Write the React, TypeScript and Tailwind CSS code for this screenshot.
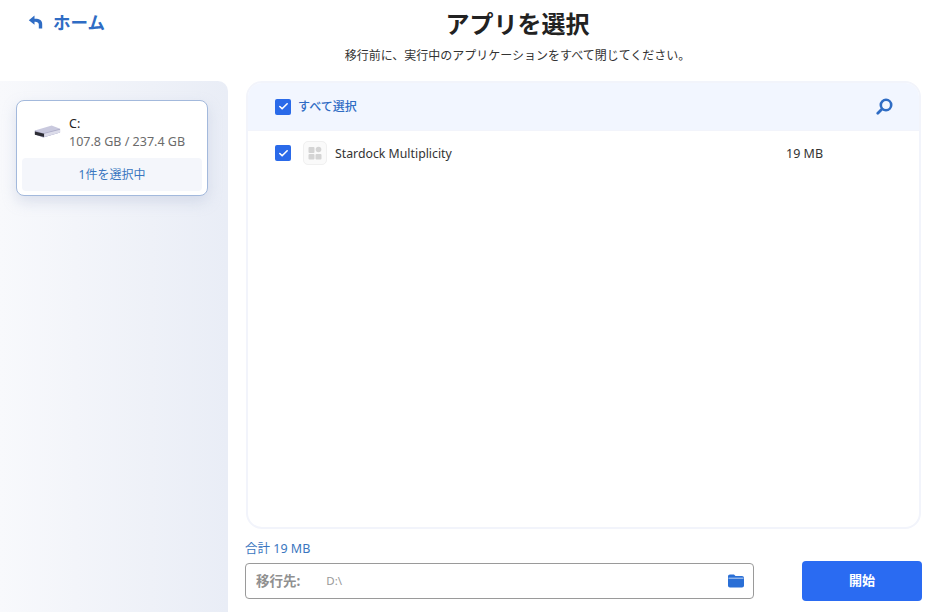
import { Check } from "lucide-react";

const FONT = "font-['Noto_Sans','Noto_Sans_CJK_JP',sans-serif]";

function Checkbox() {
  return (
    <span className="flex h-4 w-4 shrink-0 items-center justify-center rounded-[2px] bg-[#2a6ae9] text-white">
      <Check size={11} strokeWidth={3.5} />
    </span>
  );
}

function DriveIcon() {
  return (
    <svg width="28" height="15" viewBox="0 0 30 16">
      <path d="M2 7 L20 1.5 L29 5 L29 9 L11 14.5 L2 11 Z" fill="#c9c9de" />
      <path d="M2 7 L11 10 L29 5 L29 9 L11 14.5 L2 11 Z" fill="#aeaec8" />
      <path d="M2 8 L12 10.5 L12 14 L2 11.5 Z" fill="#2c2c34" />
      <path d="M12 10.5 L29 6 L29 9 L12 14 Z" fill="#dcdcea" />
    </svg>
  );
}

export default function App() {
  return (
    <div className={`flex h-[612px] w-[937px] flex-col overflow-hidden bg-white ${FONT}`}>
      <header className="flex h-[81px] shrink-0">
        <div className="flex w-[246px] shrink-0 items-start pl-[28px] pt-[12px]">
          <button type="button" className="flex items-center gap-[9px] text-[#2f6cc4]">
            <svg width="16" height="14" viewBox="0 0 16 14" fill="currentColor">
              <path d="M6.5 0.5 L0.8 5.2 L6.5 9.8 L6.5 6.8 C9 6.6 10.6 7.5 10.8 9.5 L10.8 13.5 L14.2 13.5 L14.2 9 C14.2 5.4 11.4 3.6 6.5 3.8 Z" />
            </svg>
            <span className="text-[17.5px] leading-[20px] font-bold">ホーム</span>
          </button>
        </div>
        <div className="flex flex-1 flex-col items-center pr-[148px]">
          <h1 className="mt-[8px] text-[24px] leading-[32px] font-bold text-[#222222]">アプリを選択</h1>
          <p className="mt-[8px] text-[12px] leading-[16px] text-[#333333]">
            移行前に、実行中のアプリケーションをすべて閉じてください。
          </p>
        </div>
      </header>

      <div className="flex min-h-0 flex-1">
        <aside className="w-[228px] shrink-0 rounded-tr-[10px] bg-gradient-to-r from-[#f8f9fc] to-[#e9edf6] pt-[19px] pl-[16px]">
          <div className="h-[96px] w-[192px] rounded-[8px] border border-[#a3b9dc] bg-white px-[5px] shadow-[0_6px_14px_rgba(170,180,210,0.35)]">
            <div className="flex h-[57px] items-center">
              <span className="ml-[11px] mt-[4px]">
                <DriveIcon />
              </span>
              <div className="ml-[8px] mt-[6px]">
                <div className="text-[12.5px] leading-[16px] text-[#222222]">C:</div>
                <div className="mt-[2px] text-[12.5px] leading-[16px] text-[#6b6b6b]">107.8 GB / 237.4 GB</div>
              </div>
            </div>
            <div className="flex h-[33px] items-center justify-center rounded-[4px] bg-[#f4f6fb] text-[12px] text-[#3a76c0]">
              1件を選択中
            </div>
          </div>
        </aside>

        <main className="flex min-w-0 flex-1 flex-col pl-[17px] pr-[15px]">
          <section className="mx-[1px] h-[448px] shrink-0 overflow-hidden rounded-[16px] border-2 border-[#f2f4fb] bg-white">
            <div className="flex h-[47px] items-center bg-[#f2f6ff] pl-[27px] pr-[26px]">
              <Checkbox />
              <span className="ml-[7px] text-[12px] font-medium text-[#2f6cc4]">すべて選択</span>
              <svg className="ml-auto" width="17" height="17" viewBox="0 0 17 17" fill="none" stroke="#2f6cc4">
                <circle cx="10" cy="7" r="5.2" strokeWidth="2.6" />
                <path d="M6 11 L1.8 15.2" strokeWidth="2.8" strokeLinecap="round" />
              </svg>
            </div>
            <div className="flex h-[45px] items-center border-t border-[#f2f4fb] pl-[27px]">
              <Checkbox />
              <span className="ml-[12px] flex h-6 w-6 shrink-0 items-center justify-center rounded-[5px] border border-[#f0f0f0] bg-[#fafafa]">
                <svg width="14" height="14" viewBox="0 0 14 14" fill="#d4d4d4">
                  <rect x="0.5" y="1" width="6" height="6" rx="1" />
                  <circle cx="10.5" cy="3.5" r="2.8" />
                  <rect x="0.5" y="8" width="6" height="5.5" rx="1" />
                  <rect x="7.5" y="8" width="6" height="5.5" rx="1" />
                </svg>
              </span>
              <span className="ml-[8px] mt-[2px] w-[451px] text-[12.3px] text-[#333333]">Stardock Multiplicity</span>
              <span className="mt-[2px] text-[12.5px] text-[#333333]">19 MB</span>
            </div>
          </section>

          <div className="mt-[12px] text-[12.5px] leading-[16px] text-[#3a76c0]">合計 19 MB</div>
          <div className="mt-[6px] flex items-start">
            <div className="flex h-[36px] w-[509px] items-center rounded-[4px] border border-[#9a9a9a] pl-[10px] pr-[9px]">
              <span className="text-[13.5px] font-bold text-[#909090]">移行先:</span>
              <span className="ml-[26px] text-[11.5px] text-[#999999]">D:\</span>
              <svg className="ml-auto" width="16" height="14" viewBox="0 0 16 14">
                <path d="M0 2.5 C0 1.2 0.8 0.5 2 0.5 L6 0.5 L7.5 2 L14 2 C15.2 2 16 2.8 16 4 L16 11.5 C16 12.8 15.2 13.5 14 13.5 L2 13.5 C0.8 13.5 0 12.8 0 11.5 Z" fill="#2a6fd6" />
                <path d="M0.5 4.2 L15.5 4.2" stroke="#ffffff" strokeWidth="0.7" />
              </svg>
            </div>
            <button
              type="button"
              className="ml-[48px] -mt-[2px] flex h-[40px] w-[120px] items-center justify-center rounded-[4px] bg-[#2a6bf2] text-[13px] font-bold text-white"
            >
              開始
            </button>
          </div>
        </main>
      </div>
    </div>
  );
}
